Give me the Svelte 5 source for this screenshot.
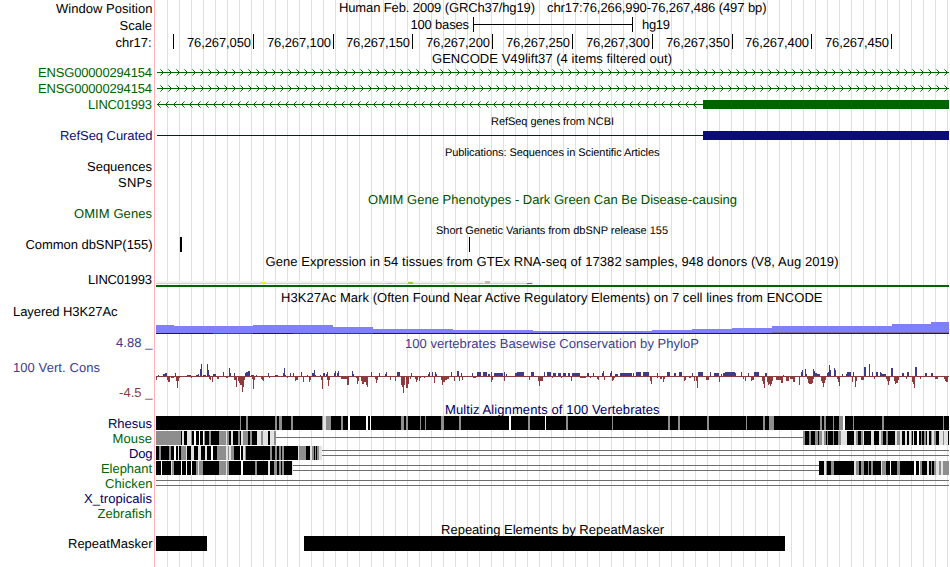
<script>
  const black = '#000', green = '#006400', navy = '#0c0c78', dkGreen = '#005000', blue = '#3c3c8c', red = '#8c3c3c', alignNavy = '#000064';
  const range = (n) => Array.from({ length: n }, (_, i) => i);
  // text entry: [content, left x, baseline y, width, colour, small?]
  const ticks = [173, 253, 333, 412, 492, 572, 652, 732, 811, 891];
  const title = (top, h, text, x, y, w, color = black, small = false) => ({ top, h, texts: [[text, x, y, w, color, small]] });
  const track = (top, h, text, x, y, w, color, kind, data) => ({ top, h, texts: [[text, x, y, w, color]], kind, data });

  const triples = (s) => s.trim().split(/\s+/).map((p) => p.split(',').map(Number));
  const stripes = (s) => s.trim().split(/\s+/).map((p) => { const [x, w, t] = p.split(','); return [+x, +w, { g: '#8e8e8e', l: '#e2e2e2', w: '#fff', k: '#000' }[t]]; });

  const up = triples(`158,1,1 163,2,2 165,2,3 175,1,3 187,4,1 196,2,1 198,1,2 200,1,7 201,1,12 203,3,1 207,1,12 208,1,6 209,1,1 213,3,2 223,1,4 229,1,8 230,1,3 234,1,3 245,1,3 246,2,4 248,2,5 251,3,1 256,1,1 268,1,3 275,3,1 283,1,3 284,1,8 285,1,1 290,1,3 293,1,3 301,1,4 307,1,1 312,1,3 313,1,3 314,1,6 315,1,1 320,1,1 323,2,3 326,1,2 327,1,4 334,1,3 335,1,5 337,1,3 338,1,5 352,1,5 353,1,2 371,1,4 379,1,3 385,1,2 386,1,4 397,3,4 411,1,3
    428,1,2 429,1,4 432,1,4 435,1,4 436,1,2 451,1,4 457,2,5 461,1,3 472,1,3 477,4,4 483,4,4 488,2,2 491,1,4 494,9,3 504,1,4 506,1,2 515,2,3 517,7,4 531,3,4 544,1,4 547,4,4 553,3,3 558,3,3 563,3,3 568,2,3 572,8,3 587,2,3 593,1,3 602,1,3 603,1,5 610,1,3 611,1,5 615,3,2 620,12,3 633,1,3 636,5,4 643,6,4 657,1,3 667,3,4 674,2,3 679,3,4
    692,1,3 698,5,4 710,1,4 714,5,3 721,1,2 723,13,3 725,10,4 741,1,4 748,1,3 754,5,4 765,2,3 783,1,1 801,1,4 802,1,6 805,1,7 806,1,2 813,1,7 814,1,5 815,2,3 817,3,2 827,1,3 828,1,4 829,1,11 830,1,6 834,1,8 835,1,6 842,1,2 846,1,2 847,4,4 853,1,4 864,2,9 869,1,12 872,1,4 876,2,4 880,1,4 881,1,3 882,4,2 891,2,8 902,2,3 907,2,4 915,2,9 925,2,3 931,2,3`);
  const down = triples(`156,1,4 167,1,4 168,2,6 171,3,2 176,1,5 177,1,12 178,1,5 179,1,2 191,1,2 209,1,3 210,1,4 212,1,6 217,2,3 226,2,2 234,2,4 236,1,11 238,1,5 239,1,7 240,2,9 242,1,16 243,1,11 244,1,4 252,1,3 253,1,13 254,1,4 261,1,3 262,1,4 263,1,5 269,1,2 287,1,2 295,1,5 296,2,4 303,1,6 309,1,6 310,1,4 321,1,4 322,1,13 327,1,4 328,1,10 329,1,4 341,6,3 347,2,9 356,1,2 357,1,8 358,1,5 361,1,5 362,2,8 364,2,6 366,1,9 367,1,11 375,1,3 376,1,7 377,1,4 390,1,4 395,1,5 401,1,9 402,1,11 403,1,17 404,1,9 406,1,12 407,1,12 408,1,8 410,1,3 416,1,6
    415,1,3 417,1,4 419,1,5 420,1,2 424,1,2 434,1,7 441,1,4 442,1,9 443,2,6 445,2,4 447,2,3 454,1,5 459,1,5 462,1,4 473,3,2 491,1,6 492,1,4 504,1,5 529,1,4 538,1,5 539,1,10 540,3,5 552,1,2 561,1,2 571,1,5 580,6,2 590,1,2 597,1,3 598,1,4 604,1,4 612,1,5 613,1,4 614,1,2 650,1,5 651,1,8 657,1,2 660,2,3 663,1,6 664,1,3
    684,1,5 685,1,4 689,2,2 694,1,5 696,1,5 697,1,12 706,3,4 719,1,6 743,1,3 745,1,5 751,1,5 752,2,4 762,1,5 763,1,8 764,1,12 767,1,6 768,1,9 769,1,8 770,1,10 771,1,8 772,1,5 776,5,4 781,1,7 782,1,7 786,3,5 790,3,3 793,2,6 799,1,9 807,1,3 808,1,7 809,3,8 812,1,7 813,1,3 821,1,5 822,1,7 823,1,11 824,1,7 825,1,4 837,1,3 838,1,6 839,1,10 852,1,6 855,1,11 856,1,5 861,3,4 874,1,3 886,1,3 887,1,5 888,1,9 889,1,5 894,1,5 895,1,8 896,2,7 898,1,4 906,1,3 912,1,6 913,1,8 914,1,12 920,1,3 935,3,3 944,1,3 945,1,5 946,2,6`);

  const rhesus = { boxes: [[156, 793]], lines: [], cuts: stripes('240,1,g 246,2,g 275,2,g 279,3,g 291,2,g 322,1,g 323,3,l 326,5,g 341,2,g 348,2,w 366,2,w 370,1,w 401,3,g 406,2,g 420,1,g 425,1,g 441,3,g 459,2,g 509,2,w 528,2,g 545,1,w 566,2,g 612,1,g 668,2,g 678,2,g 707,2,g 746,1,g 763,2,g 769,5,g 820,2,g 824,2,g 833,1,g 839,4,g 843,2,w 853,1,g 882,2,g 943,1,g') };
  const mouse = { boxes: [[156, 120], [803, 146]], lines: [[276, 527, 437]], cuts: stripes('156,25,g 182,2,l 187,4,l 191,1,g 194,2,w 199,1,w 203,1,w 204,1,g 209,2,g 219,7,g 226,1,l 227,2,g 231,2,l 238,2,g 241,2,l 243,5,g 250,2,g 257,4,l 261,2,g 263,5,l 270,4,l 274,2,g 803,2,g 809,2,g 815,3,g 819,3,g 822,2,l 824,2,g 827,1,g 833,1,g 838,3,g 841,6,l 854,2,l 856,2,g 861,2,g 863,1,l 871,3,l 879,2,l 881,2,g 886,2,g 895,2,l 897,3,g 900,2,l 905,2,l 909,2,l 911,1,g 913,1,l 917,2,w 921,1,g 924,2,g 927,2,l 931,1,g 932,2,l 934,2,g 939,4,l 943,1,g 944,4,l') };
  const dog = { boxes: [[156, 166]], lines: [[322, 627, 450], [322, 627, 455]], cuts: stripes('159,2,g 169,2,g 174,2,w 178,1,l 181,3,g 184,2,g 186,1,l 191,3,l 198,3,l 205,2,l 211,2,w 217,9,g 226,2,l 228,1,g 229,2,l 231,3,g 240,1,w 243,2,l 245,1,g 270,2,g 275,2,g 279,2,g 282,2,g 298,1,l 299,7,g 310,2,l 312,2,g 315,1,g 317,2,g 319,3,l') };
  const elephant = { boxes: [[156, 137], [819, 130]], lines: [[293, 526, 465], [293, 526, 470]], cuts: stripes('161,1,w 171,1,l 172,2,g 181,1,w 186,1,w 191,1,w 196,2,g 198,1,l 199,4,g 219,7,g 226,1,l 227,2,g 241,2,w 255,2,g 268,2,l 274,1,g 275,2,g 279,2,g 282,2,g 292,1,l 824,2,l 826,1,g 831,3,g 854,2,l 856,3,g 861,3,g 868,1,g 871,2,g 881,1,l 882,4,g 890,1,w 897,3,g 914,2,w 919,1,w 920,2,g 927,2,l 931,1,g 934,2,g 936,3,l 939,2,g 941,2,l 943,6,g') };
  const chicken = { boxes: [], cuts: [], lines: [[156, 793, 480], [156, 793, 485]] };

  const histone = [[156, 174, 325], [174, 253, 326], [253, 333, 325], [333, 373, 327], [373, 453, 329], [453, 533, 330], [533, 652, 331], [652, 692, 330], [692, 732, 329], [732, 772, 328], [772, 892, 326], [892, 931, 324], [931, 949, 322]];
  const tissues = [[261, 2, '#eeee00'], [387, 1, '#cdb79e'], [408, 2, '#9acd32'], [450, 2, '#b4eeb4'], [478, 1, '#cdb79e'], [485, 3, '#cdb79e'], [527, 1, '#ff00ff']];

  const rows = [
    { top: 0, h: 17, texts: [['Window Position', 56, 13, 96.5, black], ['Human Feb. 2009 (GRCh37/hg19)', 339, 12, 196, black], ['chr17:76,266,990-76,267,486 (497 bp)', 547, 12, 219.5, black]] },
    { top: 17, h: 16, kind: 'scale', texts: [['Scale', 119.5, 30, 32.5, black], ['100 bases', 410.5, 29, 58.5, black], ['hg19', 642, 29, 28, black]] },
    { top: 33, h: 17, kind: 'ticks', texts: [['chr17:', 115.5, 47, 36, black], ...ticks.slice(1).map((x, i) => [`76,267,${String((i + 1) * 50).padStart(3, '0')}`, x - 66, 47, 64, black])] },
    title(50, 15, 'GENCODE V49lift37 (4 items filtered out)', 432, 63, 240),
    track(65, 16, 'ENSG00000294154', 38, 77, 114, green, 'right', 72),
    track(81, 16, 'ENSG00000294154', 38, 93, 114, green, 'right', 88),
    track(97, 16, 'LINC01993', 88, 109, 64, green, 'left', 104),
    title(113, 15, 'RefSeq genes from NCBI', 491, 125, 123, black, true),
    track(128, 16, 'RefSeq Curated', 60, 140, 92.5, navy, 'refseq'),
    title(144, 15, 'Publications: Sequences in Scientific Articles', 445, 156, 214.5, black, true),
    track(159, 16, 'Sequences', 87, 171, 65, black),
    track(175, 16, 'SNPs', 118, 187, 34, black),
    title(191, 15, 'OMIM Gene Phenotypes - Dark Green Can Be Disease-causing', 368, 204, 369, dkGreen),
    track(206, 16, 'OMIM Genes', 74, 218, 78, dkGreen),
    title(222, 15, 'Short Genetic Variants from dbSNP release 155', 436, 234, 232, black, true),
    track(237, 16, 'Common dbSNP(155)', 25.5, 249, 127, black, 'snp'),
    title(253, 16, 'Gene Expression in 54 tissues from GTEx RNA-seq of 17382 samples, 948 donors (V8, Aug 2019)', 265.5, 266, 573),
    track(269, 20, 'LINC01993', 88, 284, 64, black, 'gtex'),
    title(289, 16, 'H3K27Ac Mark (Often Found Near Active Regulatory Elements) on 7 cell lines from ENCODE', 281, 302, 541.5),
    track(305, 30, 'Layered H3K27Ac', 13, 316, 104.5, black, 'histone'),
    { top: 335, h: 15, texts: [['4.88 _', 116, 347, 36.5, blue], ['100 vertebrates Basewise Conservation by PhyloP', 405, 348, 294, blue]] },
    { top: 350, h: 50, kind: 'phylop', texts: [['100 Vert. Cons', 13, 372, 87, blue], ['-4.5 _', 119, 397, 33.5, red]] },
    title(400, 16, 'Multiz Alignments of 100 Vertebrates', 445, 414, 214.5, alignNavy),
    track(416, 15, 'Rhesus', 108, 428, 44, alignNavy, 'align', rhesus),
    track(431, 15, 'Mouse', 112.5, 443, 39.5, green, 'align', mouse),
    track(446, 15, 'Dog', 129, 458, 23.5, alignNavy, 'align', dog),
    track(461, 15, 'Elephant', 101, 473, 51, green, 'align', elephant),
    track(476, 15, 'Chicken', 105, 488, 47.5, green, 'align', chicken),
    track(491, 15, 'X_tropicalis', 84, 503, 68, alignNavy),
    track(506, 15, 'Zebrafish', 97.5, 518, 54.5, green),
    title(521, 15, 'Repeating Elements by RepeatMasker', 441, 534, 223),
    track(536, 31, 'RepeatMasker', 68, 548, 84.5, black, 'repeat')
  ];
</script>

<main class="browser">
  {#each rows as row}
    <svg class="row" width="949" height={row.h} viewBox="0 {row.top} 949 {row.h}" shape-rendering="crispEdges">
      {#if row.kind === 'scale'}
        <path d="M473 17h1v15h-1zM632 17h1v15h-1zM473 24h160v1h-160z" />
      {:else if row.kind === 'ticks'}
        {#each ticks as x}<rect {x} y="34" width="1" height="15" />{/each}
      {:else if row.kind === 'right'}
        <rect x="157" y={row.data} width="792" height="1" fill={green} />
        {#each range(99) as i}
          <path class="tip" d="M{161 + i * 8} {row.data - 2}h1v1h1v3h-1v1h-1v-1h1v-3h-1z" />
          <path class="tail" d="M{160 + i * 8} {row.data - 3}h1v1h-1zM{160 + i * 8} {row.data + 3}h1v1h-1z" />
        {/each}
      {:else if row.kind === 'left'}
        <rect x="157" y={row.data} width="546" height="1" fill={green} />
        {#each range(68) as i}
          <path class="tip" d="M{160 + i * 8} {row.data - 2}h-1v1h-1v3h1v1h1v-1h-1v-3h1z" />
          <path class="tail" d="M{160 + i * 8} {row.data - 3}h1v1h-1zM{160 + i * 8} {row.data + 3}h1v1h-1z" />
        {/each}
        <rect x="703" y="100" width="246" height="9" fill={green} />
      {:else if row.kind === 'refseq'}
        <rect x="157" y="135" width="546" height="1" fill={navy} />
        <rect x="703" y="131" width="246" height="9" fill={navy} />
      {:else if row.kind === 'snp'}
        <rect x="180" y="237" width="2" height="15" />
        <rect x="469" y="237" width="1" height="15" />
      {:else if row.kind === 'gtex'}
        <rect x="156" y="281" width="377" height="3" fill="#f2f2f2" />
        <rect x="156" y="283" width="377" height="1" fill="#d0d0d0" />
        {#each tissues as [x, h, fill]}<rect {x} y={284 - h} width="5" height={h} {fill} />{/each}
        <rect x="156" y="285" width="793" height="2" fill={green} />
      {:else if row.kind === 'histone'}
        {#each histone as [a, b, y]}<rect x={a} {y} width={b - a} height={333 - y} fill="#8080ff" />{/each}
        <rect x="772" y="332" width="177" height="1" fill="#80689c" />
        <rect x="156" y="333" width="793" height="1" fill="#22184c" />
        <rect x="213" y="333" width="40" height="1" fill="#205868" />
        <rect x="293" y="333" width="80" height="1" fill="#3030b0" />
      {:else if row.kind === 'phylop'}
        <rect x="156" y="376" width="793" height="1" fill={red} />
        {#each up as [x, w, h]}<rect {x} y={376 - h} width={w} height={h} fill={blue} />{/each}
        {#each down as [x, w, h]}<rect {x} y="376" width={w} height={h} fill={red} />{/each}
      {:else if row.kind === 'align'}
        {#each row.data.lines as [x, w, y]}<rect {x} {y} width={w} height="1" fill="#6e6e6e" />{/each}
        {#each row.data.boxes as [x, w]}<rect {x} y={row.top} width={w} height="14" />{/each}
        {#each row.data.cuts as [x, w, fill]}<rect {x} y={row.top} width={w} height="14" {fill} />{/each}
      {:else if row.kind === 'repeat'}
        <rect x="156" y="536" width="51" height="15" />
        <rect x="304" y="536" width="481" height="15" />
      {/if}
      {#each row.texts as [text, x, y, w, fill, small]}
        <text class:small {x} {y} textLength={w} {fill}>{text}</text>
      {/each}
    </svg>
  {/each}
</main>

<style>
  :global(body) { margin: 0; background: #fff; }
  .browser {
    display: flex;
    flex-direction: column;
    width: 949px;
    height: 567px;
    overflow: hidden;
    background:
      linear-gradient(#ffb4b4, #ffb4b4) 154px 0 / 1px 100% no-repeat,
      repeating-linear-gradient(90deg, #dcdcf8 0 1px, transparent 1px 12px) 167px 0 / 782px 100% no-repeat,
      #fff;
  }
  .row { display: block; flex: none; overflow: visible; }
  text { font-family: "Liberation Sans", Arial, sans-serif; font-size: 13px; text-rendering: geometricPrecision; }
  .small { font-size: 11px; }
  .tip { fill: #006400; }
  .tail { fill: #006400; fill-opacity: 0.6; }
</style>
